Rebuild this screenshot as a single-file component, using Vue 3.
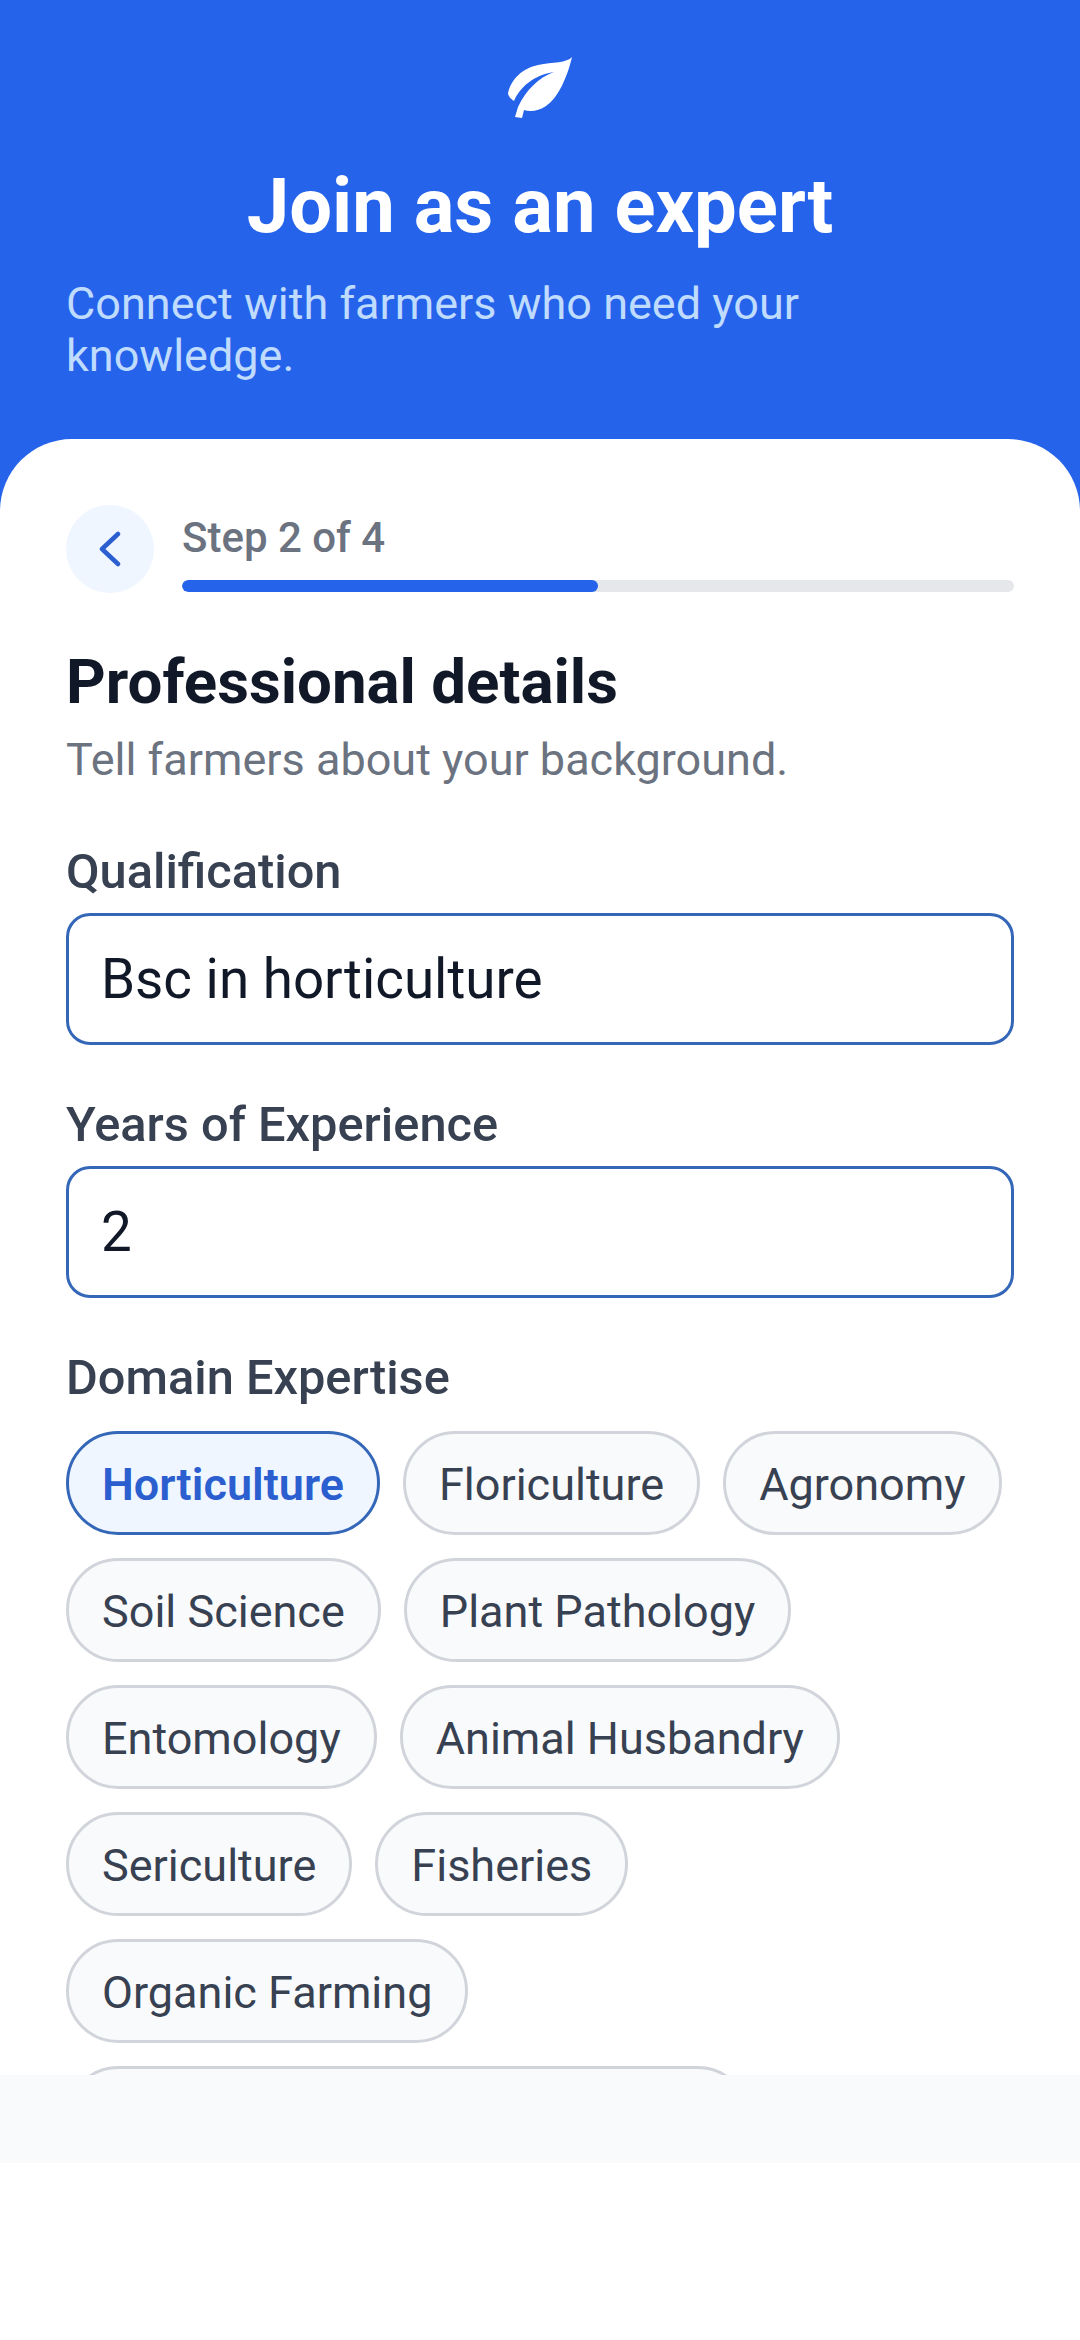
<template>
  <div class="screen">
    <header class="hero">
      <svg class="leaf" viewBox="0 0 64 61" width="64" height="61" aria-hidden="true">
        <path d="M64 0C59 6 45 5 30 8C15 11 3 22 0 36C0 39 3 42 6 44C12 30 26 18 46 15C30 21 18 33 10 50L7 60L14 61L16 53C22 55 31 54 38 49C50 41 59 21 64 0Z" fill="#fff" />
      </svg>
      <h1 class="hero-title">Join as an expert</h1>
      <p class="hero-sub">Connect with farmers who need your knowledge.</p>
    </header>

    <main class="card">
      <div class="step-row">
        <button class="back" type="button" aria-label="Back">
          <svg viewBox="0 0 24 36" width="24" height="36" aria-hidden="true">
            <path d="M20 3L4 18L20 33" fill="none" stroke="#2b5fd0" stroke-width="4.500" stroke-linecap="round" stroke-linejoin="round" />
          </svg>
        </button>
        <div class="step-info">
          <span class="step-text">Step 2 of 4</span>
          <div class="track"><div class="fill" :style="{ width: progress + '%' }"></div></div>
        </div>
      </div>

      <h2 class="section-title">Professional details</h2>
      <p class="section-sub">Tell farmers about your background.</p>

      <label class="field-label">Qualification</label>
      <div class="input">Bsc in horticulture</div>

      <label class="field-label">Years of Experience</label>
      <div class="input">2</div>

      <label class="field-label">Domain Expertise</label>
      <div class="chips">
        <span v-for="chip in domains" :key="chip" class="chip" :class="{ active: chip === selected }">{{ chip }}</span>
        <span class="chip chip-next"></span>
      </div>
    </main>

    <div class="footer-band"></div>
    <div class="bottom-space"></div>
  </div>
</template>

<script setup>
const progress = 50;
const selected = 'Horticulture';
const domains = [
  'Horticulture',
  'Floriculture',
  'Agronomy',
  'Soil Science',
  'Plant Pathology',
  'Entomology',
  'Animal Husbandry',
  'Sericulture',
  'Fisheries',
  'Organic Farming',
];
</script>

<style>
html,
body {
  margin: 0;
  background: #fff;
}
</style>

<style scoped>
.screen {
  width: 1080px;
  height: 2340px;
  display: flex;
  flex-direction: column;
  overflow: hidden;
  background: #2563eb;
  font-family: Roboto, "Noto Sans", sans-serif;
}

.hero {
  height: 439px;
  flex: none;
  box-sizing: border-box;
  padding: 57px 66px 0;
  display: flex;
  flex-direction: column;
  color: #fff;
}

.leaf {
  align-self: center;
  flex: none;
}

.hero-title {
  margin: 46px 0 0;
  font-size: 76px;
  line-height: 84px;
  font-weight: 700;
  text-align: center;
}

.hero-sub {
  margin: 30px 0 0;
  font-size: 45px;
  line-height: 52px;
  font-weight: 400;
  color: #bfdbfe;
}

.card {
  flex: 1;
  min-height: 0;
  overflow: hidden;
  box-sizing: border-box;
  padding: 66px 66px 0;
  background: #fff;
  border-radius: 72px 72px 0 0;
}

.step-row {
  display: flex;
  align-items: flex-start;
  gap: 28px;
}

.back {
  width: 88px;
  height: 88px;
  flex: none;
  padding: 0;
  border: none;
  border-radius: 50%;
  background: #eff6ff;
  display: flex;
  align-items: center;
  justify-content: center;
}

.step-info {
  flex: 1;
  padding-top: 10px;
}

.step-text {
  display: block;
  font-size: 42px;
  line-height: 46px;
  font-weight: 500;
  color: #6b7280;
}

.track {
  height: 12px;
  margin-top: 19px;
  border-radius: 6px;
  background: #e5e7eb;
  overflow: hidden;
}

.fill {
  height: 100%;
  border-radius: 6px;
  background: #2563eb;
}

.section-title {
  margin: 53px 0 0;
  font-size: 61.800px;
  line-height: 72px;
  font-weight: 700;
  color: #111827;
}

.section-sub {
  margin: 16px 0 0;
  font-size: 45px;
  line-height: 52px;
  color: #6b7280;
}

.field-label {
  display: block;
  margin-top: 58px;
  font-size: 48.750px;
  line-height: 56px;
  font-weight: 500;
  color: #374151;
}

.input + .field-label {
  margin-top: 52px;
}

.input {
  margin-top: 13px;
  height: 132px;
  box-sizing: border-box;
  padding: 0 32px;
  display: flex;
  align-items: center;
  border: 3px solid #3567b8;
  border-radius: 24px;
  font-size: 54.750px;
  color: #111827;
}

.chips {
  margin-top: 25px;
  display: flex;
  flex-wrap: wrap;
  gap: 23px;
}

.chip {
  height: 104px;
  box-sizing: border-box;
  padding: 2px 33px 0;
  display: flex;
  align-items: center;
  border: 3px solid #d1d5db;
  border-radius: 52px;
  background: #f9fafb;
  font-size: 45px;
  color: #374151;
}

.chip.active {
  border-color: #3567b8;
  background: #eff6ff;
  color: #2b5fd0;
  font-weight: 600;
}

.chip-next {
  width: 684px;
}

.footer-band {
  height: 88px;
  flex: none;
  background: #f9fafb;
}

.bottom-space {
  height: 177px;
  flex: none;
  background: #fff;
}
</style>
